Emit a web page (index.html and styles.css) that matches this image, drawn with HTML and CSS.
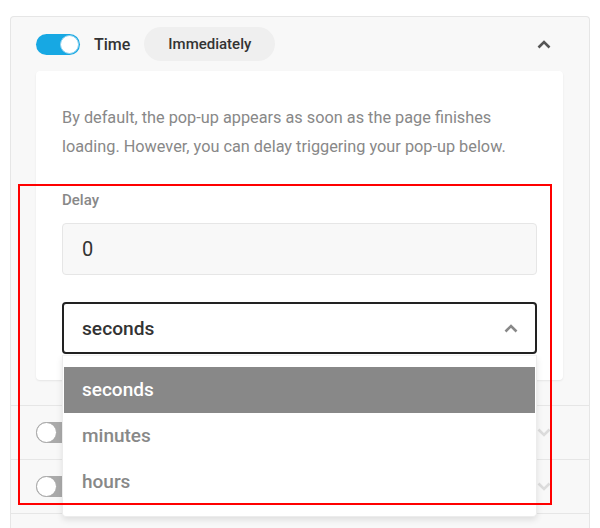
FILE: index.html
```html
<!DOCTYPE html>
<html lang="en">
<head>
<meta charset="utf-8">
<title>Time trigger</title>
<link rel="stylesheet" href="styles.css">
</head>
<body>
<div class="panel">
  <section class="trigger open">
    <div class="trigger-head">
      <span class="toggle on"><span class="knob"></span></span>
      <span class="trigger-name">Time</span>
      <span class="pill">Immediately</span>
      <svg class="chev" width="14" height="9" viewBox="0 0 14 9"><path d="M1.5 7.5 L7 2 L12.5 7.5" fill="none" stroke="#555" stroke-width="2.6"/></svg>
    </div>
    <div class="card">
      <p class="desc">By default, the pop-up appears as soon as the page finishes loading. However, you can delay triggering your pop-up below.</p>
      <label class="label">Delay</label>
      <div class="input">0</div>
      <div class="select-wrap">
        <div class="select">
          <span>seconds</span>
          <svg class="sel-chev" width="14" height="9" viewBox="0 0 14 9"><path d="M1.5 7.5 L7 2 L12.5 7.5" fill="none" stroke="#888" stroke-width="2.6"/></svg>
        </div>
        <ul class="dropdown">
          <li class="opt active">seconds</li>
          <li class="opt">minutes</li>
          <li class="opt">hours</li>
        </ul>
      </div>
    </div>
  </section>
  <section class="trigger">
    <span class="toggle"><span class="knob"></span></span>
    <svg class="chev down" width="14" height="9" viewBox="0 0 14 9"><path d="M1.5 1.5 L7 7 L12.5 1.5" fill="none" stroke="#dcdcdc" stroke-width="2.6"/></svg>
  </section>
  <section class="trigger">
    <span class="toggle"><span class="knob"></span></span>
    <svg class="chev down" width="14" height="9" viewBox="0 0 14 9"><path d="M1.5 1.5 L7 7 L12.5 1.5" fill="none" stroke="#dcdcdc" stroke-width="2.6"/></svg>
  </section>
  <section class="trigger last"></section>
</div>
<div class="highlight-box"></div>
</body>
</html>
```
FILE: styles.css
```css
* { box-sizing: border-box; }
html, body { margin: 0; padding: 0; background: #fff; }
body {
  font-family: Roboto, "Liberation Sans", Arial, sans-serif;
  color: #333;
  width: 600px;
  height: 528px;
  overflow: hidden;
  position: relative;
}
.panel {
  margin: 16px 0 0 10px;
  width: 580px;
  background: #f8f8f8;
  border: 1px solid #e6e6e6;
  border-bottom: none;
  border-radius: 4px 4px 0 0;
}
.trigger {
  display: flex;
  align-items: center;
  height: 54px;
  padding: 0 25px;
  border-top: 1px solid #e6e6e6;
}
.trigger:first-child { border-top: none; }
.trigger.last { height: 15px; }
.trigger.open {
  display: block;
  height: auto;
  padding: 0 26px 25px 25px;
}
.trigger-head {
  display: flex;
  align-items: center;
  height: 54px;
  margin-right: -26px;
  padding-right: 25px;
}
.toggle {
  position: relative;
  flex: none;
  width: 44px;
  height: 21px;
  border-radius: 11px;
  background: #aaa;
}
.toggle .knob {
  position: absolute;
  top: 0;
  left: 0;
  width: 21px;
  height: 21px;
  border-radius: 50%;
  background: #fff;
  border: 1px solid #a8a8a8;
}
.toggle.on { background: #17a8e3; }
.toggle.on .knob {
  left: auto;
  right: 1px;
  top: 1px;
  width: 19px;
  height: 19px;
  border: 1px solid #8fd2ef;
}
.trigger-name {
  margin-left: 14px;
  font-size: 16px;
  font-weight: 500;
  color: #333;
}
.pill {
  margin-left: 14px;
  height: 34px;
  line-height: 34px;
  padding: 0 24px;
  border-radius: 17px;
  background: #efefef;
  font-size: 15px;
  font-weight: 500;
  color: #333;
}
.chev {
  margin-left: auto;
  margin-right: 13px;
  flex: none;
}
.card {
  background: #fff;
  border-radius: 4px;
  box-shadow: 0 1px 2px rgba(0, 0, 0, 0.08);
  padding: 32px 26px 26px 26px;
}
.desc {
  margin: 0;
  font-size: 16.3px;
  line-height: 29px;
  color: #888;
}
.label {
  display: block;
  margin-top: 29px;
  font-size: 15px;
  line-height: 20px;
  font-weight: 500;
  color: #888;
}
.input {
  margin-top: 13px;
  height: 52px;
  line-height: 50px;
  padding-left: 19px;
  background: #f8f8f8;
  border: 1px solid #e6e6e6;
  border-radius: 4px;
  font-size: 20px;
  color: #333;
}
.select-wrap {
  position: relative;
  margin-top: 27px;
}
.select {
  display: flex;
  align-items: center;
  height: 52px;
  padding: 0 17px 0 18px;
  border: 2px solid #222;
  border-radius: 4px;
  font-size: 19.2px;
  font-weight: 500;
  color: #333;
}
.sel-chev { margin-left: auto; }
.dropdown {
  position: absolute;
  top: calc(100% + 1px);
  left: 0;
  right: 0;
  margin: 0;
  padding: 11px 1px;
  list-style: none;
  background: #fff;
  border: 1px solid #ececec;
  border-top-color: #f2f2f2;
  border-radius: 0 0 4px 4px;
  box-shadow: 0 3px 6px rgba(0, 0, 0, 0.1);
  z-index: 5;
}
.opt {
  height: 46px;
  line-height: 46px;
  padding-left: 18px;
  font-size: 19px;
  font-weight: 500;
  color: #888;
}
.opt.active {
  background: #888;
  color: #fff;
}
.highlight-box {
  position: absolute;
  left: 18px;
  top: 184px;
  width: 534px;
  height: 321px;
  border: 2px solid #ff0000;
  z-index: 10;
}
```
